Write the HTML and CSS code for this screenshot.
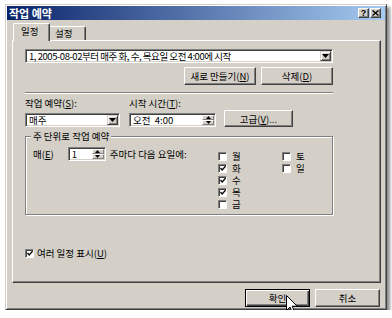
FILE: index.html
```html
<!DOCTYPE html>
<html>
<head>
  <meta charset="utf-8">
  <title>작업 예약</title>
  <link rel="stylesheet" href="styles.css">
</head>
<body>
  <div class="window">
    <div class="titlebar">
      <span class="title">작업 예약</span>
      <span class="tbtn">?</span>
      <span class="tbtn">
        <svg width="7" height="6" viewBox="0 0 7 6"><path d="M0.5 0.5L6.5 5.5M6.5 0.5L0.5 5.5" stroke="#000" stroke-width="1.4"/></svg>
      </span>
    </div>

    <div class="tabs">
      <span class="tab active">일정</span>
      <span class="tab">설정</span>
    </div>

    <div class="panel">
      <div class="field combo wide">
        <span class="value tight">1, 2005-08-02부터 매주 화, 수, 목요일 오전 4:00에 시작</span>
        <span class="drop"><svg width="7" height="4" viewBox="0 0 7 4"><path d="M0 0h7L3.5 4z"/></svg></span>
      </div>

      <div class="btnrow">
        <span class="btn w72"><span>새로 만들기(<u>N</u>)</span></span>
        <span class="btn w72"><span>삭제(<u>D</u>)</span></span>
      </div>

      <div class="sep"></div>

      <div class="labels">
        <span class="lbl1">작업 예약(<u>S</u>):</span>
        <span>시작 시간(<u>T</u>):</span>
      </div>

      <div class="fields">
        <div class="field combo narrow">
          <span class="value">매주</span>
          <span class="drop"><svg width="7" height="4" viewBox="0 0 7 4"><path d="M0 0h7L3.5 4z"/></svg></span>
        </div>
        <div class="field spin time">
          <span class="value">오전&nbsp;&nbsp;4:00</span>
          <span class="arrows">
            <span class="up"><svg width="5" height="3" viewBox="0 0 5 3"><path d="M0 3h5L2.5 0z"/></svg></span>
            <span class="down"><svg width="5" height="3" viewBox="0 0 5 3"><path d="M0 0h5L2.5 3z"/></svg></span>
          </span>
        </div>
        <span class="btn adv"><span>고급(<u>V</u>)...</span></span>
      </div>

      <div class="group">
        <span class="legend">주 단위로 작업 예약</span>
        <div class="groupbody">
          <div class="every">
            <span class="every-lbl">매(<u>E</u>)</span>
            <div class="field spin count">
              <span class="value">1</span>
              <span class="arrows">
                <span class="up"><svg width="5" height="3" viewBox="0 0 5 3"><path d="M0 3h5L2.5 0z"/></svg></span>
                <span class="down"><svg width="5" height="3" viewBox="0 0 5 3"><path d="M0 0h5L2.5 3z"/></svg></span>
              </span>
            </div>
            <span>주마다 다음 요일에:</span>
          </div>
          <div class="days">
            <label class="check"><span class="box"></span><span>월</span></label>
            <label class="check"><span class="box"></span><span>토</span></label>
            <label class="check"><span class="box"><svg width="7" height="7" viewBox="0 0 7 7"><path d="M0.5 3l2 2.2 4-4.4" fill="none" stroke="#000" stroke-width="1.6"/></svg></span><span>화</span></label>
            <label class="check"><span class="box"></span><span>일</span></label>
            <label class="check"><span class="box"><svg width="7" height="7" viewBox="0 0 7 7"><path d="M0.5 3l2 2.2 4-4.4" fill="none" stroke="#000" stroke-width="1.6"/></svg></span><span>수</span></label>
            <span></span>
            <label class="check"><span class="box"><svg width="7" height="7" viewBox="0 0 7 7"><path d="M0.5 3l2 2.2 4-4.4" fill="none" stroke="#000" stroke-width="1.6"/></svg></span><span>목</span></label>
            <span></span>
            <label class="check"><span class="box"></span><span>금</span></label>
          </div>
        </div>
      </div>

      <label class="check multi"><span class="box"><svg width="7" height="7" viewBox="0 0 7 7"><path d="M0.5 3l2 2.2 4-4.4" fill="none" stroke="#000" stroke-width="1.6"/></svg></span><span>여러 일정 표시(<u>U</u>)</span></label>
    </div>

    <div class="footer">
      <span class="btn default">확인</span>
      <span class="btn">취소</span>
    </div>

    <svg class="cursor" width="12" height="19" viewBox="0 0 12 19">
      <path d="M0.5 0.5v15l3.5-3.5 2.5 6 2.2-1-2.5-5.8h5z" fill="#fff" stroke="#000" stroke-width="1"/>
    </svg>
  </div>
</body>
</html>
```

FILE: styles.css
```css
* { box-sizing: border-box; }
body {
  margin: 0;
  background: #fff;
  font-family: "Noto Sans CJK KR", "Liberation Sans", sans-serif;
  font-size: 9.5px;
  color: #000;
}
u { text-decoration: underline; text-underline-offset: 1px; }

.window {
  position: relative;
  width: 382px;
  height: 306px;
  margin: 4px 0 0 5px;
  padding: 1px;
  background: #d4d0c8;
  border: 1px solid;
  border-color: #d4d0c8 #404040 #404040 #d4d0c8;
  box-shadow: inset 1px 1px #fff, inset -1px -1px #808080, 3px 3px 3px rgba(0,0,0,.45);
}

/* title bar */
.titlebar {
  display: flex;
  align-items: center;
  height: 14px;
  padding: 0 4px 0 2px;
  background: linear-gradient(to right, #0a246a, #a6caf0);
}
.title {
  flex: 1;
  color: #fff;
  font-weight: bold;
  font-size: 11px;
  line-height: 14px;
}
.tbtn {
  display: flex;
  align-items: center;
  justify-content: center;
  width: 11px;
  height: 10px;
  margin-left: 1px;
  background: #d4d0c8;
  border: 1px solid;
  border-color: #fff #404040 #404040 #fff;
  box-shadow: inset -1px -1px #808080;
  font: bold 9px "Liberation Sans", sans-serif;
  line-height: 8px;
}

/* tabs */
.tabs {
  display: flex;
  align-items: flex-end;
  height: 20px;
  padding-left: 6px;
}
.tab {
  width: 36px;
  height: 14px;
  padding-left: 5px;
  line-height: 12px;
  border: 1px solid;
  border-bottom: 0;
  border-left: 0;
  border-color: #fff #404040 #fff #fff;
  border-radius: 0 2px 0 0;
  box-shadow: inset -1px 0 #808080;
}
.tab.active {
  position: relative;
  z-index: 1;
  width: 37px;
  height: 18px;
  margin-bottom: -1px;
  padding-left: 7px;
  line-height: 15px;
  background: #d4d0c8;
  border-left: 1px solid #fff;
  border-radius: 2px 2px 0 0;
}

/* panel */
.panel {
  width: 369px;
  height: 243px;
  margin-left: 5px;
  padding: 8px 0 0 12px;
  border: 1px solid;
  border-color: #fff #404040 #404040 #fff;
  box-shadow: inset -1px -1px #808080;
}

.field {
  display: flex;
  align-items: center;
  height: 14px;
  padding: 1px;
  background: #fff;
  border: 1px solid;
  border-color: #808080 #fff #fff #808080;
  box-shadow: inset 1px 1px #404040, inset -1px -1px #d4d0c8;
}
.field .value {
  flex: 1;
  padding-left: 2px;
  line-height: 10px;
  white-space: nowrap;
}
.value.tight { letter-spacing: -0.45px; }
.combo.wide { width: 308px; }
.combo.narrow { width: 95px; }
.drop {
  display: flex;
  align-items: center;
  justify-content: center;
  width: 11px;
  height: 10px;
  background: #d4d0c8;
  border: 1px solid;
  border-color: #d4d0c8 #404040 #404040 #d4d0c8;
  box-shadow: inset 1px 1px #fff, inset -1px -1px #808080;
}
.arrows {
  display: flex;
  flex-direction: column;
  width: 12px;
  height: 10px;
}
.arrows span {
  display: flex;
  align-items: center;
  justify-content: center;
  height: 5px;
  background: #d4d0c8;
  border: 1px solid;
  border-color: #fff #808080 #808080 #fff;
}
.arrows svg { display: block; }
.time { width: 87px; margin-left: 9px; }
.count { width: 38px; margin: 0 4px 0 14px; }

.btn {
  display: flex;
  align-items: center;
  justify-content: center;
  height: 18px;
  background: #d4d0c8;
  border: 1px solid;
  border-color: #fff #404040 #404040 #fff;
  box-shadow: inset -1px -1px #808080;
  line-height: 12px;
  white-space: nowrap;
}
.w72 { width: 72px; }

.btnrow {
  display: flex;
  justify-content: flex-end;
  gap: 5px;
  width: 308px;
  margin-top: 4px;
}
.sep {
  width: 308px;
  height: 2px;
  margin-top: 7px;
  border-top: 1px solid #808080;
  border-bottom: 1px solid #fff;
}
.labels {
  display: flex;
  margin-top: 3px;
  line-height: 12px;
}
.lbl1 { width: 104px; }
.fields {
  display: flex;
  align-items: flex-end;
  height: 18px;
}
.adv {
  width: 69px;
  height: 17px;
  margin-left: 8px;
}

/* group box */
.group {
  width: 308px;
  height: 79px;
  margin-top: 9px;
  border: 1px solid #808080;
  box-shadow: inset 1px 1px #fff, 1px 1px #fff;
}
.legend {
  display: table;
  margin: -7px 0 0 5px;
  padding: 0 2px;
  line-height: 12px;
  background: #d4d0c8;
}
.groupbody {
  display: flex;
  padding: 5px 0 0 7px;
}
.every {
  display: flex;
  align-items: center;
  width: 185px;
  height: 14px;
}
.days {
  display: grid;
  grid-template-columns: 64px 40px;
  grid-auto-rows: 12px;
  margin-top: 3px;
}

.check {
  display: flex;
  align-items: center;
  gap: 5px;
  line-height: 12px;
}
.box {
  display: flex;
  align-items: center;
  justify-content: center;
  width: 9px;
  height: 9px;
  background: #fff;
  border: 1px solid;
  border-color: #808080 #fff #fff #808080;
  box-shadow: inset 1px 1px #404040;
}
.box svg { display: block; margin: 1px 0 0 1px; }
.check.multi { margin-top: 32px; gap: 3px; }

/* footer buttons */
.footer {
  display: flex;
  justify-content: flex-end;
  gap: 5px;
  padding: 6px 5px 0 0;
}
.footer .btn { width: 65px; }
.btn.default {
  border-color: #000;
  box-shadow: inset 1px 1px #fff, inset -1px -1px #404040, inset -2px -2px #808080;
}

.cursor {
  position: absolute;
  left: 280px;
  top: 290px;
}
```
